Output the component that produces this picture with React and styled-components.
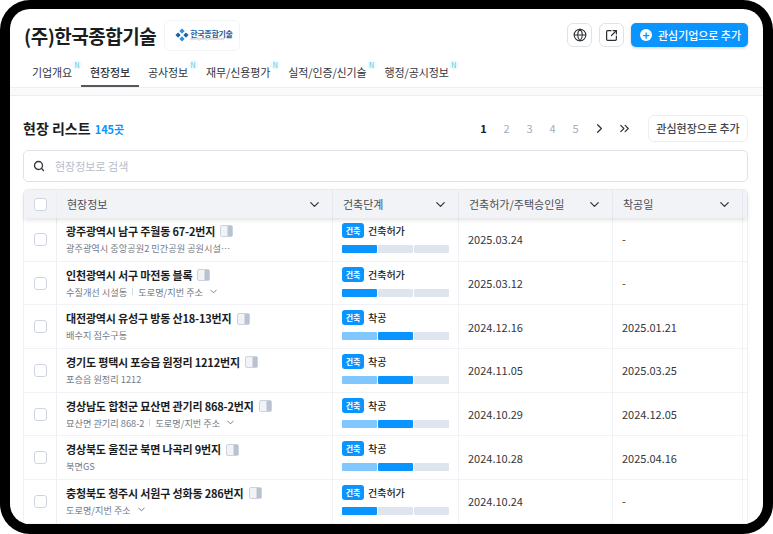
import React from "react";
import styled, { createGlobalStyle } from "styled-components";
import { ChevronDown, ChevronRight, ChevronsRight, Globe, Search, SquareArrowOutUpRight } from "lucide-react";

const GlobalStyle = createGlobalStyle`
  html, body { margin: 0; padding: 0; background: #fff; }
  body {
    font-family: "Noto Sans CJK KR", "Noto Sans", "Liberation Sans", sans-serif;
    color: #1b1d21;
  }
  * { box-sizing: border-box; }
`;

const TABS = [
  { label: "기업개요", isNew: true },
  { label: "현장정보", active: true },
  { label: "공사정보", isNew: true },
  { label: "재무/신용평가", isNew: true },
  { label: "실적/인증/신기술", isNew: true },
  { label: "행정/공시정보", isNew: true },
];

const SITES = [
  { name: "광주광역시 남구 주월동 67-2번지", sub: "광주광역시 중앙공원2 민간공원 공원시설⋯", step: 1, permit: "2025.03.24", start: "-" },
  { name: "인천광역시 서구 마전동 블록", sub: "수질개선 시설동", road: true, step: 1, permit: "2025.03.12", start: "-" },
  { name: "대전광역시 유성구 방동 산18-13번지", sub: "배수지 점수구동", step: 2, permit: "2024.12.16", start: "2025.01.21" },
  { name: "경기도 평택시 포승읍 원정리 1212번지", sub: "포승읍 원정리 1212", step: 2, permit: "2024.11.05", start: "2025.03.25" },
  { name: "경상남도 합천군 묘산면 관기리 868-2번지", sub: "묘산면 관기리 868-2", road: true, step: 2, permit: "2024.10.29", start: "2024.12.05" },
  { name: "경상북도 울진군 북면 나곡리 9번지", sub: "북면GS", step: 2, permit: "2024.10.28", start: "2025.04.16" },
  { name: "충청북도 청주시 서원구 성화동 286번지", road: true, step: 1, permit: "2024.10.24", start: "-" },
];

const COLUMNS = [
  { label: "현장정보", width: 276 },
  { label: "건축단계", width: 126 },
  { label: "건축허가/주택승인일", width: 154 },
  { label: "착공일", width: 130 },
];

const Logo = () => (
  <LogoBox>
    <svg width="14" height="14" viewBox="0 0 16 16">
      <path d="M8 0.5 L11 3.5 L8 6.5 L5 3.5 Z" fill="#2f8fd8" />
      <path d="M3.5 5 L6.5 8 L3.5 11 L0.5 8 Z" fill="#1b5fa8" />
      <path d="M12.5 5 L15.5 8 L12.5 11 L9.5 8 Z" fill="#1b5fa8" />
      <path d="M8 9.5 L11 12.5 L8 15.5 L5 12.5 Z" fill="#2f8fd8" />
    </svg>
    <LogoWords>
      <LogoText>한국종합기술</LogoText>
      <LogoSub>Korea Engineering Consultants Corp.</LogoSub>
    </LogoWords>
  </LogoBox>
);

const PanelIcon = () => (
  <svg width="13" height="12" viewBox="0 0 13 12">
    <rect x="0.5" y="0.5" width="12" height="11" rx="1.5" fill="#f1f3f7" stroke="#ccd3df" />
    <rect x="7.5" y="1" width="4.5" height="10" fill="#b9c2d0" />
  </svg>
);

const Stage = ({ step }) => (
  <>
    <StageTop>
      <StageBadge>건축</StageBadge>
      <StageName>{step === 1 ? "건축허가" : "착공"}</StageName>
    </StageTop>
    <ProgressBar>
      {[1, 2, 3].map((n) => (
        <ProgressPart key={n} $state={n === step ? "now" : n < step ? "done" : "todo"} />
      ))}
    </ProgressBar>
  </>
);

const App = () => (
  <Frame>
    <GlobalStyle />
    <Screen>
      <Header>
        <TitleGroup>
          <CompanyName>(주)한국종합기술</CompanyName>
          <Logo />
        </TitleGroup>
        <HeaderActions>
          <IconButton><Globe size={14} strokeWidth={1.8} /></IconButton>
          <IconButton><SquareArrowOutUpRight size={13} strokeWidth={2.2} /></IconButton>
          <PrimaryButton>
            <PlusDot>+</PlusDot>
            관심기업으로 추가
          </PrimaryButton>
        </HeaderActions>
      </Header>
      <TabBar>
        {TABS.map((t) => (
          <Tab key={t.label} $active={t.active}>
            {t.label}
            {t.isNew && <NewMark>N</NewMark>}
          </Tab>
        ))}
      </TabBar>
      <Strip />
      <Content>
        <ListHead>
          <ListTitle>
            현장 리스트 <ListCount>145곳</ListCount>
          </ListTitle>
          <Pager>
            {[1, 2, 3, 4, 5].map((n) => (
              <PageNumber key={n} $active={n === 1}>{n}</PageNumber>
            ))}
            <PageArrow><ChevronRight size={15} /></PageArrow>
            <PageArrow><ChevronsRight size={15} strokeWidth={2} /></PageArrow>
            <GhostButton>관심현장으로 추가</GhostButton>
          </Pager>
        </ListHead>
        <SearchBox>
          <Search size={12} strokeWidth={2.6} color="#33363b" />
          <SearchText>현장정보로 검색</SearchText>
        </SearchBox>
        <Table>
          <HeadRow>
            <CheckCell><CheckBox /></CheckCell>
            {COLUMNS.map((c) => (
              <HeadCell key={c.label} $width={c.width}>
                {c.label}
                <ChevronDown size={15} color="#33363b" />
              </HeadCell>
            ))}
            <RestCell />
          </HeadRow>
          {SITES.map((s) => (
            <Row key={s.name}>
              <CheckCell><CheckBox /></CheckCell>
              <InfoCell>
                <SiteName>{s.name} <PanelIcon /></SiteName>
                <SiteSub>
                  {s.sub}
                  {s.sub && s.road && <SubDivider />}
                  {s.road && (
                    <>
                      도로명/지번 주소
                      <ChevronDown size={11} color="#6e7684" />
                    </>
                  )}
                </SiteSub>
              </InfoCell>
              <StageCell><Stage step={s.step} /></StageCell>
              <DateCell $width={154}>{s.permit}</DateCell>
              <DateCell $width={130}>{s.start}</DateCell>
              <RestCell />
            </Row>
          ))}
        </Table>
      </Content>
    </Screen>
  </Frame>
);

const Frame = styled.div`
  width: 773px;
  height: 534px;
  padding: 9px 10px 10px;
  background: #000;
  border-radius: 30px;
  overflow: hidden;
`;

const Screen = styled.div`
  height: 100%;
  background: #fff;
  border-radius: 20px;
  overflow: hidden;
`;

const Header = styled.div`
  display: flex;
  justify-content: space-between;
  align-items: center;
  height: 50px;
  padding: 2px 15px 0 14px;
`;

const TitleGroup = styled.div`
  display: flex;
  align-items: center;
  gap: 8px;
`;

const CompanyName = styled.h1`
  margin: 0;
  font-size: 19px;
  font-weight: 700;
  letter-spacing: -0.5px;
`;

const LogoBox = styled.div`
  display: flex;
  align-items: center;
  gap: 1px;
  width: 76px;
  height: 31px;
  padding-left: 10px;
  border: 1px solid #f1f3f6;
  border-radius: 6px;
`;

const LogoWords = styled.div`
  display: flex;
  flex-direction: column;
`;

const LogoText = styled.span`
  font-size: 8px;
  font-weight: 700;
  line-height: 9px;
  letter-spacing: -0.3px;
  color: #22619f;
`;

const LogoSub = styled.span`
  font-size: 2px;
  line-height: 3px;
  white-space: nowrap;
  color: #9aa3b0;
`;

const HeaderActions = styled.div`
  display: flex;
  align-items: center;
  gap: 7px;
`;

const IconButton = styled.button`
  display: flex;
  align-items: center;
  justify-content: center;
  width: 25px;
  height: 24px;
  padding: 0;
  background: #fff;
  border: 1px solid #dfe2e8;
  border-radius: 6px;
  color: #2a2d32;
`;

const PrimaryButton = styled.button`
  display: flex;
  align-items: center;
  gap: 6px;
  height: 24px;
  width: 117px;
  padding: 0 0 0 9px;
  background: #0a94ff;
  border: none;
  border-radius: 5px;
  color: #fff;
  font-family: inherit;
  font-size: 11px;
  font-weight: 500;
  letter-spacing: -0.05px;
  box-shadow: 0 1px 3px rgba(0, 0, 0, 0.2);
`;

const PlusDot = styled.span`
  display: flex;
  align-items: center;
  justify-content: center;
  width: 12px;
  height: 12px;
  background: #fff;
  border-radius: 50%;
  color: #0a94ff;
  font-size: 12px;
  font-weight: 700;
  line-height: 1;
`;

const TabBar = styled.div`
  display: flex;
  height: 28px;
  padding-left: 13px;
`;

const Tab = styled.div`
  position: relative;
  display: flex;
  align-items: center;
  height: 28px;
  padding: 0 9px;
  font-size: 11px;
  letter-spacing: -0.12px;
  color: #33363b;
  font-weight: ${(p) => (p.$active ? 500 : 400)};
  border-bottom: 2px solid ${(p) => (p.$active ? "#55585e" : "transparent")};
`;

const NewMark = styled.span`
  position: absolute;
  top: 1px;
  right: -1px;
  width: 10px;
  height: 10px;
  text-align: center;
  font-size: 7px;
  line-height: 10px;
  letter-spacing: 0;
  color: #45c6dc;
  background: #f1fbfd;
  border-radius: 50%;
`;

const Strip = styled.div`
  height: 9px;
  background: #fafafb;
  border-top: 1px solid #eceef1;
  border-bottom: 1px solid #eceef1;
`;

const Content = styled.div`
  padding: 0 15px 0 13px;
`;

const ListHead = styled.div`
  display: flex;
  justify-content: space-between;
  align-items: center;
  height: 54px;
  padding-top: 11px;
  padding-bottom: 1px;
`;

const ListTitle = styled.div`
  font-size: 14px;
  font-weight: 700;
`;

const ListCount = styled.span`
  margin-left: 1px;
  font-size: 11px;
  letter-spacing: -0.1px;
  color: #0a94ff;
`;

const Pager = styled.div`
  display: flex;
  align-items: center;
`;

const PageNumber = styled.span`
  width: 23px;
  text-align: center;
  font-size: 11px;
  font-weight: ${(p) => (p.$active ? 700 : 400)};
  color: ${(p) => (p.$active ? "#1b1d21" : "#a3adbd")};
`;

const PageArrow = styled.span`
  display: flex;
  justify-content: center;
  width: 25px;
  color: #33363b;
`;

const GhostButton = styled.button`
  height: 27px;
  width: 100px;
  margin-left: 11px;
  padding: 0;
  background: #fff;
  border: 1px solid #eceef2;
  border-radius: 6px;
  color: #44474d;
  font-family: inherit;
  font-size: 11px;
  font-weight: 500;
`;

const SearchBox = styled.div`
  display: flex;
  align-items: center;
  gap: 10px;
  height: 32px;
  padding-left: 9px;
  border: 1px solid #dfe2e8;
  border-radius: 5px;
`;

const SearchText = styled.span`
  font-size: 11px;
  color: #b5bdcb;
`;

const Table = styled.div`
  margin-top: 7px;
  border: 1px solid #eef0f4;
  border-bottom: none;
  border-radius: 5px 5px 0 0;
`;

const HeadRow = styled.div`
  position: relative;
  display: flex;
  height: 28px;
  background: #f1f3f7;
  box-shadow: 0 2px 5px rgba(0, 0, 0, 0.12);
  border-radius: 5px 5px 0 0;
`;

const Row = styled.div`
  display: flex;
  height: 43.7px;
  border-bottom: 1px solid #f0f2f6;
`;

const CheckCell = styled.div`
  display: flex;
  align-items: center;
  justify-content: center;
  width: 33px;
  flex: none;
  border-right: 1px solid #eceef3;
`;

const CheckBox = styled.span`
  display: block;
  width: 13px;
  height: 13px;
  background: #fff;
  border: 1px solid #cfd5e0;
  border-radius: 3px;
`;

const HeadCell = styled.div`
  display: flex;
  align-items: center;
  justify-content: space-between;
  width: ${(p) => p.$width}px;
  flex: none;
  padding: 0 10px 0 10px;
  font-size: 11px;
  color: #4a4e55;
  border-right: 1px solid #e6e9ef;
`;

const RestCell = styled.div`
  flex: 1;
`;

const InfoCell = styled.div`
  display: flex;
  flex-direction: column;
  justify-content: center;
  gap: 2px;
  width: 276px;
  flex: none;
  padding-left: 9px;
  border-right: 1px solid #f0f2f6;
`;

const SiteName = styled.div`
  display: flex;
  align-items: center;
  gap: 5px;
  font-size: 11px;
  font-weight: 700;
  line-height: 15px;
  letter-spacing: -0.17px;
`;

const SiteSub = styled.div`
  display: flex;
  align-items: center;
  gap: 5px;
  height: 14px;
  font-size: 9.2px;
  color: #727986;
`;

const SubDivider = styled.i`
  width: 1px;
  height: 7px;
  background: #d5d9e0;
`;

const StageCell = styled.div`
  width: 126px;
  flex: none;
  padding: 5px 9px 0 9px;
  border-right: 1px solid #f0f2f6;
`;

const StageTop = styled.div`
  display: flex;
  align-items: center;
  gap: 4px;
`;

const StageBadge = styled.span`
  width: 22px;
  height: 15px;
  background: #0a94ff;
  border-radius: 3px;
  color: #fff;
  font-size: 8px;
  font-weight: 700;
  line-height: 15px;
  text-align: center;
`;

const StageName = styled.span`
  font-size: 10px;
  font-weight: 500;
`;

const ProgressBar = styled.div`
  display: flex;
  gap: 1px;
  margin-top: 7px;
`;

const PROGRESS_COLOURS = { done: "#80c7ff", now: "#0a94ff", todo: "#dfe5ee" };

const ProgressPart = styled.span`
  flex: 1;
  height: 8px;
  background: ${(p) => PROGRESS_COLOURS[p.$state]};
  border-radius: 1px;
`;

const DateCell = styled.div`
  display: flex;
  align-items: center;
  width: ${(p) => p.$width}px;
  flex: none;
  padding-left: 9px;
  font-size: 11px;
  color: #33363b;
  border-right: 1px solid #f0f2f6;
`;

export default App;
